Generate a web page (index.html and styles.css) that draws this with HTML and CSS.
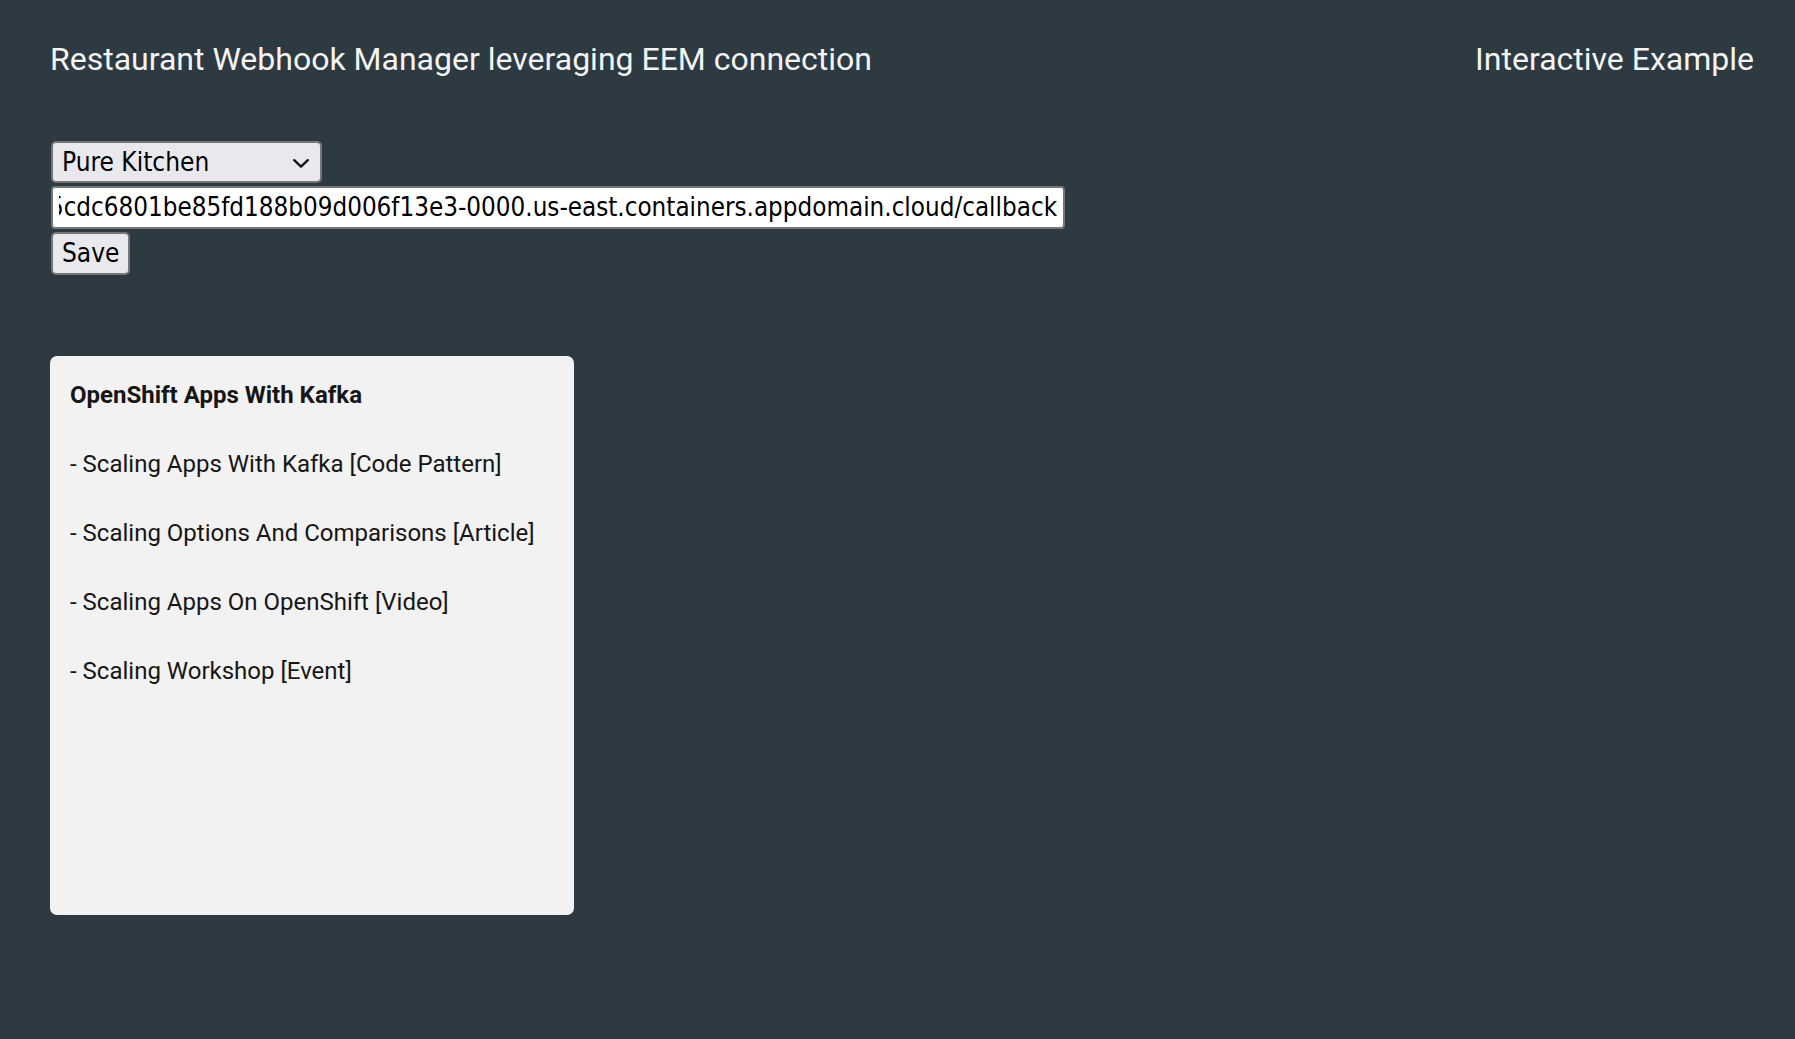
FILE: index.html
```html
<!DOCTYPE html>
<html lang="en">
<head>
<meta charset="utf-8">
<title>Restaurant Webhook Manager</title>
<link rel="stylesheet" href="styles.css">
</head>
<body>
<div class="page">
  <header class="topbar">
    <div class="app-title">Restaurant Webhook Manager leveraging EEM connection</div>
    <div class="app-link">Interactive Example</div>
  </header>

  <form class="webhook-form">
    <div class="select-wrap">
      <select class="restaurant-select">
        <option>Pure Kitchen</option>
        <option>Green Fork</option>
        <option>Taste Lab</option>
      </select>
      <svg class="select-chevron" width="16" height="9" viewBox="0 0 16 9" aria-hidden="true">
        <path d="M1.2 1.2 L8 7.6 L14.8 1.2" fill="none" stroke="#161616" stroke-width="2.4" stroke-linecap="round" stroke-linejoin="round"/>
      </svg>
    </div>
    <input id="callbackUrl" class="url-input" type="text" value="https://restaurant-webhook.kafka-cluster-3e25cdc6801be85fd188b09d006f13e3-0000.us-east.containers.appdomain.cloud/callback">
    <button type="button" class="save-btn">Save</button>
  </form>

  <section class="resource-card">
    <div class="card-title">OpenShift Apps With Kafka</div>
    <div class="card-item">- Scaling Apps With Kafka [Code Pattern]</div>
    <div class="card-item">- Scaling Options And Comparisons [Article]</div>
    <div class="card-item">- Scaling Apps On OpenShift [Video]</div>
    <div class="card-item">- Scaling Workshop [Event]</div>
  </section>
</div>
<script src="script.js"></script>
</body>
</html>
```

FILE: styles.css
```css
html, body {
  margin: 0;
  padding: 0;
  background: #2d3a42;
}

.page {
  min-height: 1039px;
  box-sizing: border-box;
  padding: 41px 41px 0 50px;
  font-family: Roboto, "Liberation Sans", sans-serif;
}

.topbar {
  display: flex;
  justify-content: space-between;
  align-items: flex-start;
}

.app-title,
.app-link {
  color: #f4f4f4;
  font-size: 32px;
  font-weight: 400;
  line-height: 37.5px;
}

.webhook-form {
  margin: 62px 0 0 1px;
  display: flex;
  flex-direction: column;
  align-items: flex-start;
  gap: 3px;
}

.select-wrap {
  position: relative;
  display: inline-block;
}

.restaurant-select,
.url-input,
.save-btn {
  font-family: "DejaVu Sans Condensed", "DejaVu Sans", sans-serif;
  font-stretch: condensed;
  font-size: 26px;
  color: #000;
  box-sizing: border-box;
  margin: 0;
}

.restaurant-select {
  -webkit-appearance: none;
  appearance: none;
  width: 271px;
  height: 42px;
  padding: 0 40px 0 9px;
  background: #e9e9ed;
  border: 2px solid #767676;
  border-radius: 5px;
}

.select-chevron {
  position: absolute;
  right: 13px;
  top: 18px;
}

.url-input {
  width: 1014px;
  height: 43px;
  padding: 0 6px;
  font-size: 25.75px;
  background: #fff;
  border: 2px solid #767676;
  border-radius: 4px;
  outline: none;
}

.save-btn {
  height: 43px;
  padding: 0 9px 0 9px;
  background: #e9e9ed;
  border: 2px solid #767676;
  border-radius: 5px;
}

.resource-card {
  margin-top: 81px;
  width: 524px;
  height: 559px;
  box-sizing: border-box;
  padding: 25px 20px;
  background: #f2f2f2;
  border-radius: 7px;
  color: #161616;
  display: flex;
  flex-direction: column;
  gap: 41px;
}

.card-title,
.card-item {
  font-size: 24px;
  line-height: 28px;
}

.card-title {
  font-weight: 700;
}
```

FILE: script.js
```js
(function () {
  var input = document.getElementById('callbackUrl');
  input.scrollLeft = input.scrollWidth;
  window.addEventListener('load', function () {
    input.scrollLeft = input.scrollWidth;
  });
})();
```
